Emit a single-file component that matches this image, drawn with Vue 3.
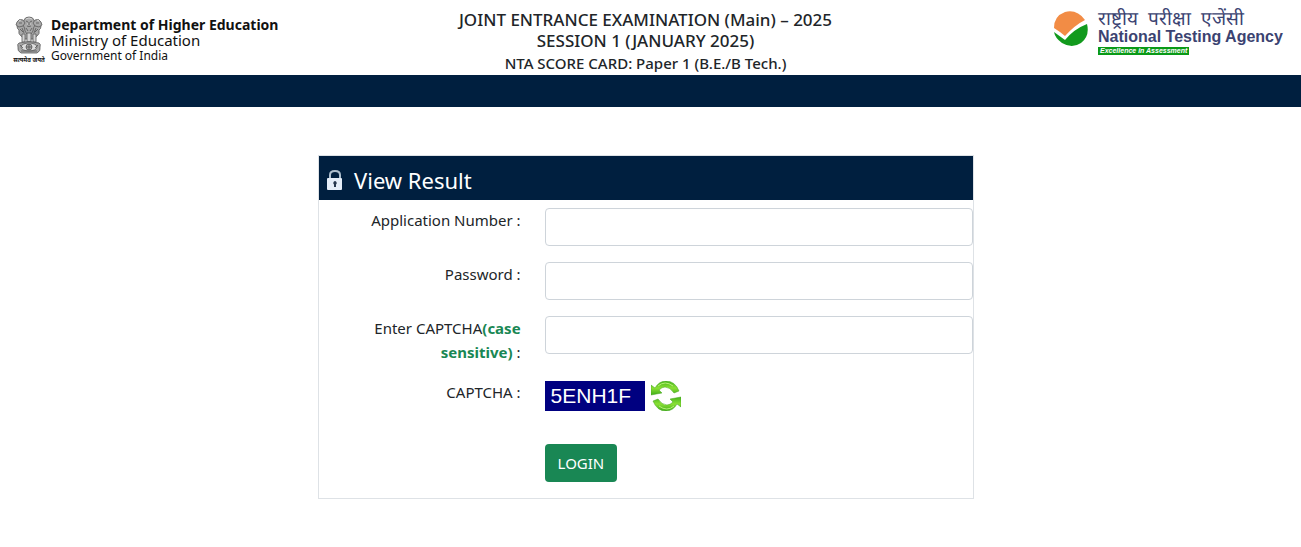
<script setup>
import {reactive} from 'vue'

const data = reactive({
  applicationNumber: "",
  password: "",
  captchaInput: "",
  captcha: "5ENH1F"
})

function refreshCaptcha() {
  const chars = "ABCDEFGHJKLMNPQRSTUVWXYZ123456789"
  let code = ""
  for (let i = 0; i < 6; i++) {
    code += chars[Math.floor(Math.random() * chars.length)]
  }
  data.captcha = code
}

function login() {
  if (data.captchaInput !== data.captcha) {
    alert("Please enter the correct CAPTCHA")
    refreshCaptcha()
  }
}
</script>

<template>
  <div class="page">
    <header class="header">
      <div class="ministry">
        <div class="emblem">
          <svg width="28" height="38" viewBox="0 0 28 38" aria-hidden="true">
            <g fill="#a8a8a8" stroke="#5c5c5c" stroke-width="0.8">
              <path d="M9 8Q4 7 2 10Q2 13 4 14Q3 18 6 20L10 23H18L22 20Q25 18 24 14Q26 13 26 10Q24 7 19 8Z"/>
              <path d="M9 4Q10 1 14 1Q18 1 19 4L20 9Q18 12 18 15L16 18H12L10 15Q10 12 8 9Z"/>
              <path d="M2 6Q4 2 8 4L10 7L8 10L4 11L1 9Z"/>
              <path d="M26 6Q24 2 20 4L18 7L20 10L24 11L27 9Z"/>
              <path d="M7 18H10V26H7ZM12 17H16V26H12ZM18 18H21V26H18Z" fill="#d4d4d4"/>
              <path d="M4 27Q2 28 3 31Q2 35 6 37H22Q26 35 25 31Q26 28 24 27Q14 24 4 27Z"/>
              <ellipse cx="14" cy="31" rx="8" ry="4" fill="#ddd"/>
              <circle cx="14" cy="31" r="3"/>
            </g>
            <g fill="none" stroke="#555" stroke-width="0.8">
              <path d="M11 5L13 6M17 5L15 6M14 6V9M12 10Q14 11 16 10M11 12L13 15M17 12L15 15M4 7H7M24 7H21M5 13L8 16M23 13L20 16M7 12L9 17M21 12L19 17"/>
              <path d="M14 28V34M11 31H17M6 35H22M5 29L8 32M23 29L20 32"/>
            </g>
            <path d="M11 3L14 2L17 3M4 5L6 4M22 4L24 5M12 8H13M15 8H16" fill="none" stroke="#ddd" stroke-width="0.8"/>
          </svg>
          <span class="motto" lang="hi">सत्यमेव जयते</span>
        </div>
        <div class="ministry-text">
          <strong>Department of Higher Education</strong>
          <span>Ministry of Education</span>
          <small>Government of India</small>
        </div>
      </div>
      <div class="exam">
        <h1>JOINT ENTRANCE EXAMINATION (Main) – 2025<br>SESSION 1 (JANUARY 2025)</h1>
        <h2>NTA SCORE CARD: Paper 1 (B.E./B Tech.)</h2>
      </div>
      <div class="agency">
        <svg width="36" height="36" viewBox="0 0 36 36" aria-hidden="true">
          <path d="M1 17Q1 5 12 1Q24-2 32 9Q22 14 12 25Q6 20 1 17Z" fill="#f28c45"/>
          <path d="M1 21L12 29Q21 18 34 13Q37 25 28 32Q19 38 9 32Q2 27 1 21Z" fill="#129a1d"/>
        </svg>
        <div class="agency-text">
          <span class="agency-hi" lang="hi"><span>राष्ट्रीय</span> <span>परीक्षा</span> <span>एजेंसी</span></span>
          <span class="agency-en">National Testing Agency</span>
          <span class="tagline">Excellence in Assessment</span>
        </div>
      </div>
    </header>
    <div class="bar"></div>

    <main class="main">
      <form class="card" @submit.prevent="login">
        <h3 class="card-title">
          <svg width="16" height="20" viewBox="0 0 16 20" aria-hidden="true">
            <path d="M3 10V5Q3 1 8 1Q13 1 13 5V10" fill="none" stroke="#aebfce" stroke-width="2"/>
            <rect x="0" y="8" width="15" height="12" rx="1" fill="#e4edf8"/>
            <path d="M8 11a2 2 0 0 1 1 3.500V17H7V14.500A2 2 0 0 1 8 11Z" fill="#25364d"/>
          </svg>
          View Result
        </h3>
        <div class="fields">
          <label for="application">Application Number :</label>
          <input id="application" v-model="data.applicationNumber" class="input" type="text" autocomplete="off"/>
          <label for="password">Password :</label>
          <input id="password" v-model="data.password" class="input" type="password" autocomplete="off"/>
          <label for="captcha">Enter CAPTCHA<b>(case sensitive)</b> :</label>
          <input id="captcha" v-model="data.captchaInput" class="input" type="text" autocomplete="off"/>
          <span class="label">CAPTCHA :</span>
          <div class="captcha-row">
            <span class="captcha">{{ data.captcha }}</span>
            <button class="refresh" type="button" aria-label="Refresh CAPTCHA" @click="refreshCaptcha">
              <svg width="30" height="30" viewBox="0 0 30 30">
                <defs>
                  <linearGradient id="leaf" x1="0" y1="0" x2="0" y2="1">
                    <stop offset="0" stop-color="#45b51b"/>
                    <stop offset="0.5" stop-color="#8be035"/>
                    <stop offset="1" stop-color="#3fae18"/>
                  </linearGradient>
                </defs>
                <g fill="url(#leaf)" stroke="#43a51c" stroke-width="0.5">
                  <path d="M0 4L4 7Q8 0 15 0Q24 0 28 10L23 12Q19 6 14 6Q11 6 8 9L11 12L0 14Z"/>
                  <path d="M30 26L26 23Q22 30 15 30Q6 30 2 20L7 18Q11 24 16 24Q19 24 22 21L19 18L30 16Z"/>
                </g>
                <path d="M7 5Q14-1 22 5M23 25Q16 31 8 25" fill="none" stroke="#b5ee77" stroke-width="1"/>
              </svg>
            </button>
          </div>
          <button class="btn" type="submit">LOGIN</button>
        </div>
      </form>
    </main>
  </div>
</template>

<style>
body {
  margin: 0;
  background: #fff;
}
</style>

<style scoped>
.page {
  font-family: "Noto Sans", "Open Sans", sans-serif;
  font-size: 15px;
  line-height: 24px;
  color: #212529;
}

.header {
  display: grid;
  grid-template-columns: 1fr auto 1fr;
  height: 75px;
  padding: 0 13px;
}

.ministry {
  display: flex;
  gap: 6px;
  padding-top: 16px;
  color: #111;
}

.emblem {
  display: flex;
  flex-direction: column;
  align-items: center;
  width: 32px;
}

.motto {
  font-size: 6px;
  font-weight: bold;
  line-height: 12px;
  white-space: nowrap;
}

.ministry-text {
  display: flex;
  flex-direction: column;
  font-size: 15px;
  line-height: 15px;
  white-space: nowrap;
}

.ministry-text strong {
  font-size: 14px;
  line-height: 17px;
}

.ministry-text small {
  font-size: 12px;
  line-height: 15px;
}

.exam {
  padding: 9px 10px 0 0;
  text-align: center;
}

.exam h1,
.exam h2 {
  margin: 0;
  font-size: 17px;
  font-weight: 500;
  line-height: 21px;
}

.exam h2 {
  font-size: 15px;
  line-height: 24px;
}

.agency {
  display: flex;
  justify-content: flex-end;
  gap: 9px;
  padding-top: 11px;
  color: #3b4371;
}

.agency-text {
  display: flex;
  flex-direction: column;
  align-items: flex-start;
  min-width: 190px;
  font-family: "Liberation Sans", Arial, sans-serif;
  white-space: nowrap;
}

.agency-hi {
  display: flex;
  gap: 10px;
  font-size: 19px;
  line-height: 16px;
}

.agency-en {
  font-size: 16px;
  font-weight: bold;
  line-height: 20px;
}

.tagline {
  padding: 0 2px;
  background: #0a9a17;
  color: #fff;
  font-size: 7px;
  font-style: italic;
  font-weight: bold;
  line-height: 8px;
}

.bar {
  height: 32px;
  background: #001f3f;
}

.main {
  padding: 48px 9px 48px 0;
}

.card {
  box-sizing: border-box;
  max-width: 656px;
  margin: 0 auto;
  border: 1px solid #dee2e6;
}

.card-title {
  box-sizing: border-box;
  display: flex;
  align-items: center;
  gap: 11px;
  height: 44px;
  margin: 0;
  padding: 4px 8px 0;
  background: #001f3f;
  color: #fff;
  font-size: 22px;
  font-weight: normal;
}

.fields {
  display: grid;
  grid-template-columns: 8fr 17fr;
  gap: 16px 24px;
  padding: 8px 0 16px;
}

.fields label,
.label {
  padding-left: 48px;
  text-align: right;
}

.fields b {
  color: #198754;
}

.input {
  box-sizing: border-box;
  width: 100%;
  height: 38px;
  padding: 6px 12px;
  border: 1px solid #ced4da;
  border-radius: 4px;
  background: #fff;
  font: inherit;
}

.captcha-row {
  box-sizing: border-box;
  display: flex;
  align-items: flex-start;
  gap: 6px;
  height: 48px;
  padding-top: 1px;
}

.captcha {
  box-sizing: border-box;
  width: 100px;
  padding-left: 6px;
  background: #000080;
  color: #fff;
  font-family: "Liberation Sans", Arial, sans-serif;
  font-size: 21px;
  line-height: 30px;
}

.refresh {
  display: flex;
  padding: 0;
  border: none;
  background: none;
  cursor: pointer;
}

.btn {
  grid-column: 2;
  justify-self: start;
  height: 38px;
  padding: 0 13px;
  border: none;
  border-radius: 4px;
  background: #198754;
  color: #fff;
  font: inherit;
  cursor: pointer;
}
</style>
